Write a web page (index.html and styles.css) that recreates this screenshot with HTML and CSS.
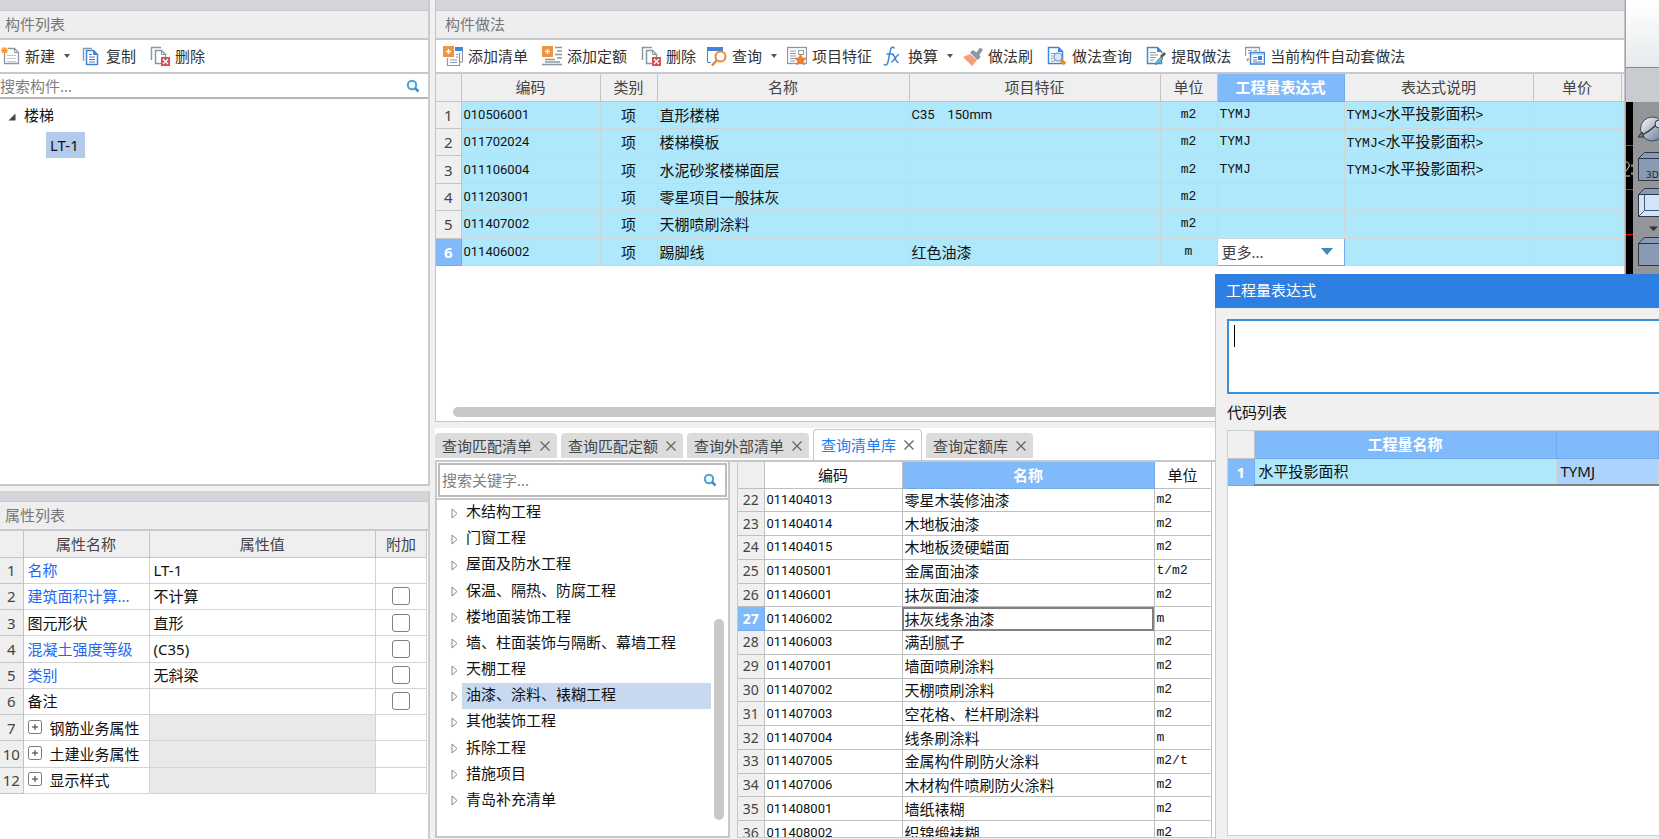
FILE: index.html
```html
<!DOCTYPE html>
<html lang="zh-CN">
<head>
<meta charset="utf-8">
<title>构件做法</title>
<link rel="stylesheet" href="styles.css">
</head>
<body>
<svg class="defs" aria-hidden="true">
  <defs>
    <symbol id="i-delete" viewBox="0 0 20 20">
      <path d="M1.500 14V1.500H11" fill="none" stroke="#8b98a3" stroke-width="1.500"/>
      <path d="M5.500 17.500V4.500H11.500L15.500 8.500V17.500Z" fill="#fff" stroke="#8b98a3" stroke-width="1.500"/>
      <path d="M11.500 4.500V8.500H15.500" fill="none" stroke="#8b98a3"/>
      <rect x="11" y="11" width="9" height="9" fill="#d55050"/>
      <path d="M13 13l5 5M18 13l-5 5" stroke="#fff" stroke-width="1.300"/>
    </symbol>
    <symbol id="i-search" viewBox="0 0 14 14">
      <circle cx="6" cy="6" r="4.200" fill="#eef8ff" stroke="#4e9fd0" stroke-width="2"/>
      <path d="M9 9l3.500 3.500" stroke="#3f8fc5" stroke-width="2.500"/>
    </symbol>
    <symbol id="i-plus" viewBox="0 0 14 14">
      <rect x="0.500" y="0.500" width="13" height="13" rx="2" fill="#fff" stroke="#777"/>
      <path d="M4 7h6M7 4v6" stroke="#333"/>
    </symbol>
    <symbol id="i-tri" viewBox="0 0 7 11">
      <path d="M1 1v9l5-4.500z" fill="#fff" stroke="#888"/>
    </symbol>
    <symbol id="i-close" viewBox="0 0 10 10">
      <path d="M0.500 0.500l9 9M9.500 0.500l-9 9" stroke="#666" stroke-width="1.300"/>
    </symbol>
    <linearGradient id="g-ball" x1="0" y1="0" x2="1" y2="1">
      <stop offset="0" stop-color="#fff"/><stop offset="1" stop-color="#5d6f8c"/>
    </linearGradient>
  </defs>
</svg>
<div class="app">
  <aside class="side">
    <section class="panel components">
      <div class="strip"></div>
      <h2 class="title">构件列表</h2>
      <div class="toolbar">
        <button class="tool split"><svg class="ico" viewBox="0 0 20 20"><path d="M4.500 17.500V2.500H14.500L18.500 6.500V17.500Z" fill="#fff" stroke="#8b98a3" stroke-width="1.300"/><path d="M14.500 2.500V6.500H18.500" fill="none" stroke="#8b98a3"/><path d="M7 9.500h9M7 12.500h9M7 15.500h9" stroke="#c3c8cd"/><rect x="1" y="1" width="7" height="7" fill="#fff"/><path d="M4.500 1v7M1 4.500h7M2 2l5 5M7 2l-5 5" stroke="#f39c32" stroke-width="1.300"/></svg><span>新建</span><i class="caret"></i></button>
        <button class="tool"><svg class="ico" viewBox="0 0 20 20"><path d="M2.500 15V2.500H11" fill="none" stroke="#8b98a3" stroke-width="1.400"/><path d="M5.500 18.500V4.500H12.500L16.500 8.500V18.500Z" fill="#fff" stroke="#3f86d8" stroke-width="1.500"/><path d="M12.500 4.500V8.500H16.500" fill="#3f86d8" stroke="#3f86d8"/><path d="M8 8.500h3M8 11h6M8 13.500h6M8 16h6" stroke="#3f86d8"/></svg><span>复制</span></button>
        <button class="tool"><svg class="ico"><use href="#i-delete"/></svg><span>删除</span></button>
      </div>
      <label class="search flush"><input type="text" placeholder="搜索构件..." aria-label="搜索构件"><svg class="glass"><use href="#i-search"/></svg></label>
      <ul class="tree root">
        <li><svg class="open" viewBox="0 0 8 8"><path d="M7.500 0.500v7H0.500z" fill="#444"/></svg><span>楼梯</span>
          <ul><li><span class="picked">LT-1</span></li></ul>
        </li>
      </ul>
    </section>
    <section class="panel props">
      <div class="strip"></div>
      <h2 class="title">属性列表</h2>
      <table class="grid prop-grid">
        <colgroup><col class="w23"><col class="w126"><col><col class="w51"></colgroup>
        <thead><tr><th></th><th>属性名称</th><th>属性值</th><th>附加</th></tr></thead>
        <tbody>
          <tr><th>1</th><td class="link">名称</td><td>LT-1</td><td></td></tr>
          <tr><th>2</th><td class="link">建筑面积计算...</td><td>不计算</td><td class="mid"><input type="checkbox" aria-label="附加 建筑面积计算"></td></tr>
          <tr><th>3</th><td>图元形状</td><td>直形</td><td class="mid"><input type="checkbox" aria-label="附加 图元形状"></td></tr>
          <tr><th>4</th><td class="link">混凝土强度等级</td><td>(C35)</td><td class="mid"><input type="checkbox" aria-label="附加 混凝土强度等级"></td></tr>
          <tr><th>5</th><td class="link">类别</td><td>无斜梁</td><td class="mid"><input type="checkbox" aria-label="附加 类别"></td></tr>
          <tr><th>6</th><td>备注</td><td></td><td class="mid"><input type="checkbox" aria-label="附加 备注"></td></tr>
          <tr><th>7</th><td><svg class="plus"><use href="#i-plus"/></svg>钢筋业务属性</td><td class="off"></td><td></td></tr>
          <tr><th>10</th><td><svg class="plus"><use href="#i-plus"/></svg>土建业务属性</td><td class="off"></td><td></td></tr>
          <tr><th>12</th><td><svg class="plus"><use href="#i-plus"/></svg>显示样式</td><td class="off"></td><td></td></tr>
        </tbody>
      </table>
    </section>
  </aside>

  <main class="main">
    <section class="panel method">
      <div class="strip"></div>
      <h2 class="title wide">构件做法</h2>
      <div class="toolbar">
        <button class="tool"><svg class="ico" viewBox="0 0 20 20"><path d="M4.500 12v7.500H16.500V7" fill="#fff" stroke="#8b98a3" stroke-width="1.200"/><path d="M19.500 4v12H17" fill="none" stroke="#8b98a3" stroke-width="1.200"/><path d="M12 1h8v4h-8z" fill="#3f86d8"/><path d="M7 14h7M7 16.500h7M13 8.500h2M13 11h2" stroke="#8b98a3"/><rect width="11" height="11" fill="#ee9444"/><path d="M5.500 3v5M3 5.500h5" stroke="#fff" stroke-width="1.300"/></svg><span>添加清单</span></button>
        <button class="tool"><svg class="ico" viewBox="0 0 20 20"><path d="M13 1.500h7M15 5h5M13 8.500h7M15 12h5M3 13.500h10M0 18.500h20M3 16h15" stroke="#8b98a3" stroke-width="1.300"/><rect width="11" height="11" fill="#ee9444"/><path d="M5.500 3v5M3 5.500h5" stroke="#fff" stroke-width="1.300"/></svg><span>添加定额</span></button>
        <button class="tool"><svg class="ico"><use href="#i-delete"/></svg><span>删除</span></button>
        <button class="tool split"><svg class="ico" viewBox="0 0 20 20"><path d="M0 1h16v4H0z" fill="#3f86d8"/><path d="M0.500 4v12.500H4M15.500 4v2" fill="none" stroke="#3f86d8"/><circle cx="13.500" cy="10.500" r="5" fill="#fff" stroke="#ed8436" stroke-width="2"/><path d="M9.500 14.500L5 19.500" stroke="#ed8436" stroke-width="2.500"/></svg><span>查询</span><i class="caret"></i></button>
        <button class="tool"><svg class="ico" viewBox="0 0 20 20"><rect x="0.500" y="1.500" width="19" height="16" fill="#fff" stroke="#8b98a3" stroke-width="1.300"/><path d="M3 5h6M3 7.500h6M3 10h6M3 12.500h5M3 15h5" stroke="#8b98a3"/><rect x="11.500" y="4.500" width="5" height="4" fill="none" stroke="#8b98a3"/><path d="M13.500 7.500l2 4 4.500.500-3.300 3 1 4.500-4.200-2.300-4.200 2.300 1-4.500L7 12l4.500-.500z" fill="#ef7e2e"/></svg><span>项目特征</span></button>
        <button class="tool split"><svg class="ico" viewBox="0 0 20 20"><path d="M11.500 2.500C9.500-.500 7.800 1.500 7.200 5L5 16c-.600 3-2.300 4-4.200 2.200M3.500 8h7" fill="none" stroke="#3f86d8" stroke-width="1.500"/><path d="M9 9c3-2 3.200 8.500 6.700 7.500M16 8.500c-2-.500-6 8.500-8 7.500" fill="none" stroke="#3f86d8" stroke-width="1.500"/></svg><span>换算</span><i class="caret"></i></button>
        <button class="tool"><svg class="ico" viewBox="0 0 20 20"><path d="M0 11l7-3 7 6-5 6z" fill="#f7a078"/><path d="M7 6.500l3-2.500 3.500 2.500L17 1.500l3 2-3.500 5.500 1 2.500-3 2.500z" fill="#8b98a3"/></svg><span>做法刷</span></button>
        <button class="tool"><svg class="ico" viewBox="0 0 20 20"><path d="M1.500 17.500V1.500H11.500L15.500 5.500V17.500Z" fill="#fff" stroke="#3f86d8" stroke-width="1.500"/><path d="M11 1v5h5z" fill="#3f86d8"/><path d="M4 7.500h4M4 10h2M4 12.500h2M4 15h4" stroke="#8b98a3"/><circle cx="11" cy="11" r="4" fill="#dce8fa" stroke="#6a93d0" stroke-width="1.200"/><path d="M14 14l4 4" stroke="#f08c1d" stroke-width="3.500"/></svg><span>做法查询</span></button>
        <button class="tool"><svg class="ico" viewBox="0 0 20 20"><path d="M15.500 7V5.500L11.500 1.500H1.500V17.500H15.500V15" fill="#fff" stroke="#3f86d8" stroke-width="1.500"/><path d="M11 1v5h5z" fill="#3f86d8"/><path d="M4 6.500h6M4 9h8M4 11.500h6M4 14h4" stroke="#8b98a3"/><path d="M9.500 18.500l1-3 4.500-4.500 2 2-4.500 4.500z" fill="#5cc0d8" stroke="#5e6f7a" stroke-width=".800"/><path d="M14 10l4-4 2 2-4 4z" fill="#555"/></svg><span>提取做法</span></button>
        <button class="tool"><svg class="ico" viewBox="0 0 20 20"><path d="M0.500 10V1.500H14.500V5" fill="none" stroke="#8b98a3" stroke-width="1.300"/><path d="M3 4.500h4M3 7h2M9 4.500h3" stroke="#8b98a3"/><path d="M1 13l3-1-1 4z" fill="#f08c1d"/><rect x="5.500" y="6.500" width="14" height="11.500" fill="#fff" stroke="#3f86d8" stroke-width="1.500"/><path d="M6 8h13" stroke="#8bb4ea"/><path d="M8 11.500h4M8 14h4M8 16h9" stroke="#3f86d8"/><rect x="13" y="10" width="4" height="4" fill="#3f86d8"/></svg><span>当前构件自动套做法</span></button>
      </div>
      <table class="grid work-grid">
        <colgroup><col class="w25"><col class="w139"><col class="w57"><col><col class="w251"><col class="w57"><col class="w127"><col class="w189"><col class="w88"><col class="w3"></colgroup>
        <thead><tr><th></th><th>编码</th><th>类别</th><th>名称</th><th>项目特征</th><th>单位</th><th class="on">工程量表达式</th><th>表达式说明</th><th>单价</th><th></th></tr></thead>
        <tbody>
          <tr><th>1</th><td class="code">010506001</td><td class="mid">项</td><td>直形楼梯</td><td class="code spaced">C35    150mm</td><td class="mono mid">m2</td><td class="mono">TYMJ</td><td><span class="mono">TYMJ&lt;</span>水平投影面积<span class="mono">&gt;</span></td><td></td><td></td></tr>
          <tr><th>2</th><td class="code">011702024</td><td class="mid">项</td><td>楼梯模板</td><td></td><td class="mono mid">m2</td><td class="mono">TYMJ</td><td><span class="mono">TYMJ&lt;</span>水平投影面积<span class="mono">&gt;</span></td><td></td><td></td></tr>
          <tr><th>3</th><td class="code">011106004</td><td class="mid">项</td><td>水泥砂浆楼梯面层</td><td></td><td class="mono mid">m2</td><td class="mono">TYMJ</td><td><span class="mono">TYMJ&lt;</span>水平投影面积<span class="mono">&gt;</span></td><td></td><td></td></tr>
          <tr><th>4</th><td class="code">011203001</td><td class="mid">项</td><td>零星项目一般抹灰</td><td></td><td class="mono mid">m2</td><td></td><td></td><td></td><td></td></tr>
          <tr><th>5</th><td class="code">011407002</td><td class="mid">项</td><td>天棚喷刷涂料</td><td></td><td class="mono mid">m2</td><td></td><td></td><td></td><td></td></tr>
          <tr><th class="on">6</th><td class="code">011406002</td><td class="mid">项</td><td>踢脚线</td><td>红色油漆</td><td class="mono mid">m</td><td class="pick"><div class="combo"><select aria-label="工程量表达式"><option>更多...</option></select><i class="drop"></i></div></td><td></td><td></td><td></td></tr>
        </tbody>
      </table>
      <div class="hscroll"></div>
    </section>

    <section class="query">
      <nav class="tabs">
        <button class="tab">查询匹配清单<svg class="x"><use href="#i-close"/></svg></button>
        <button class="tab">查询匹配定额<svg class="x"><use href="#i-close"/></svg></button>
        <button class="tab">查询外部清单<svg class="x"><use href="#i-close"/></svg></button>
        <button class="tab current">查询清单库<svg class="x"><use href="#i-close"/></svg></button>
        <button class="tab">查询定额库<svg class="x"><use href="#i-close"/></svg></button>
      </nav>
      <div class="query-body">
        <div class="catalog">
          <label class="search boxed"><input type="text" placeholder="搜索关键字..." aria-label="搜索关键字"><svg class="glass"><use href="#i-search"/></svg></label>
          <div class="catalog-list">
            <ul class="tree chapters">
              <li><svg class="tri"><use href="#i-tri"/></svg><span>木结构工程</span></li>
              <li><svg class="tri"><use href="#i-tri"/></svg><span>门窗工程</span></li>
              <li><svg class="tri"><use href="#i-tri"/></svg><span>屋面及防水工程</span></li>
              <li><svg class="tri"><use href="#i-tri"/></svg><span>保温、隔热、防腐工程</span></li>
              <li><svg class="tri"><use href="#i-tri"/></svg><span>楼地面装饰工程</span></li>
              <li><svg class="tri"><use href="#i-tri"/></svg><span>墙、柱面装饰与隔断、幕墙工程</span></li>
              <li><svg class="tri"><use href="#i-tri"/></svg><span>天棚工程</span></li>
              <li><svg class="tri"><use href="#i-tri"/></svg><span class="sel">油漆、涂料、裱糊工程</span></li>
              <li><svg class="tri"><use href="#i-tri"/></svg><span>其他装饰工程</span></li>
              <li><svg class="tri"><use href="#i-tri"/></svg><span>拆除工程</span></li>
              <li><svg class="tri"><use href="#i-tri"/></svg><span>措施项目</span></li>
              <li><svg class="tri"><use href="#i-tri"/></svg><span>青岛补充清单</span></li>
            </ul>
            <div class="vscroll"></div>
          </div>
        </div>
        <div class="items">
          <table class="grid item-grid">
            <colgroup><col class="w26"><col class="w138"><col class="w252"><col class="w57"></colgroup>
            <thead><tr><th></th><th class="plain">编码</th><th class="on">名称</th><th class="plain">单位</th></tr></thead>
            <tbody>
              <tr><th>22</th><td class="code">011404013</td><td>零星木装修油漆</td><td class="mono">m2</td></tr>
              <tr><th>23</th><td class="code">011404014</td><td>木地板油漆</td><td class="mono">m2</td></tr>
              <tr><th>24</th><td class="code">011404015</td><td>木地板烫硬蜡面</td><td class="mono">m2</td></tr>
              <tr><th>25</th><td class="code">011405001</td><td>金属面油漆</td><td class="mono">t/m2</td></tr>
              <tr><th>26</th><td class="code">011406001</td><td>抹灰面油漆</td><td class="mono">m2</td></tr>
              <tr><th class="on">27</th><td class="code">011406002</td><td class="focus">抹灰线条油漆</td><td class="mono">m</td></tr>
              <tr><th>28</th><td class="code">011406003</td><td>满刮腻子</td><td class="mono">m2</td></tr>
              <tr><th>29</th><td class="code">011407001</td><td>墙面喷刷涂料</td><td class="mono">m2</td></tr>
              <tr><th>30</th><td class="code">011407002</td><td>天棚喷刷涂料</td><td class="mono">m2</td></tr>
              <tr><th>31</th><td class="code">011407003</td><td>空花格、栏杆刷涂料</td><td class="mono">m2</td></tr>
              <tr><th>32</th><td class="code">011407004</td><td>线条刷涂料</td><td class="mono">m</td></tr>
              <tr><th>33</th><td class="code">011407005</td><td>金属构件刷防火涂料</td><td class="mono">m2/t</td></tr>
              <tr><th>34</th><td class="code">011407006</td><td>木材构件喷刷防火涂料</td><td class="mono">m2</td></tr>
              <tr><th>35</th><td class="code">011408001</td><td>墙纸裱糊</td><td class="mono">m2</td></tr>
              <tr><th>36</th><td class="code">011408002</td><td>织锦缎裱糊</td><td class="mono">m2</td></tr>
            </tbody>
          </table>
        </div>
      </div>
    </section>
  </main>

  <div class="canvas">
    <div class="ribbon"></div>
    <div class="ribbon-foot"></div>
    <div class="scene">
      <svg class="model" viewBox="0 0 7 180"><path d="M0 43.500h7M0 87.500h7" stroke="#0a8a0a"/><path d="M0 132.500h7" stroke="#f00" stroke-width="1.300"/><path d="M0 60q4 0 3 5l-3 4M0 74h4M6 62v3M6 70v3" fill="none" stroke="#ddd"/></svg>
      <svg class="views" viewBox="0 0 26 180">
        <circle cx="19.500" cy="27" r="12" fill="url(#g-ball)" stroke="#3d4a5e"/><path d="M6 34q10-3 20-14" fill="none" stroke="#333d4f" stroke-width="1.500"/><path d="M5 35l4-5 2 5z" fill="#777" stroke="#333"/><circle cx="26" cy="22" r="4" fill="#ccd5e2" stroke="#333"/>
        <g fill="#8a9ab3" stroke="#2c3646"><path d="M5.500 56.500l6-6H30v6z"/><path d="M5.500 56.500H30V78.500H5.500z"/></g>
        <text x="13" y="76" class="cube-label">3D</text>
        <g stroke="#2c3646"><path d="M5.500 92.500l6-6H30v6z" fill="#8a9ab3"/><path d="M5.500 92.500H30V114.500H5.500z" fill="#d0e4fb"/><path d="M11.500 92.500v16H30M5.500 114.500l6-6" fill="none" stroke="#46566c"/></g>
        <path d="M16 124.500h9l-4.500 4.500z" fill="#333"/>
        <g fill="#8a9ab3" stroke="#2c3646"><path d="M5.500 141.500l6-6H30v6z"/><path d="M5.500 141.500H30V163.500H5.500z"/></g>
      </svg>
    </div>
  </div>

  <div class="dialog" role="dialog" aria-labelledby="dlg-title">
    <h2 class="dialog-title" id="dlg-title">工程量表达式</h2>
    <div class="dialog-body">
      <div class="expr"><textarea aria-label="工程量表达式"></textarea><i class="cursor"></i></div>
      <h3 class="list-title">代码列表</h3>
      <div class="code-list">
        <table class="grid code-grid">
          <colgroup><col class="w26"><col class="w302"><col></colgroup>
          <thead><tr><th></th><th class="on">工程量名称</th><th class="on"></th></tr></thead>
          <tbody><tr><th class="on">1</th><td class="name">水平投影面积</td><td class="val">TYMJ</td></tr></tbody>
        </table>
      </div>
    </div>
  </div>
</div>
</body>
</html>
```
FILE: styles.css
```css
* { box-sizing: border-box; }

:root {
  --ui: "Noto Sans", "Noto Sans CJK SC", sans-serif;
  --line: #c6c8cc;
  --accent: #80bafb;
}

body {
  margin: 0;
  overflow: hidden;
  font-family: var(--ui);
  font-size: 15px;
  line-height: 20px;
  color: #111;
  background: #f0f0f0;
}

h2, h3, ul { margin: 0; padding: 0; }
ul { list-style: none; }
button, input, select, textarea { font: inherit; color: inherit; }

.defs { position: absolute; width: 0; height: 0; }

.app {
  position: relative;
  display: flex;
  height: 100vh;
  overflow: hidden;
}

/* Shared panel parts */
.panel { display: flex; flex-direction: column; background: #fff; }
.strip { flex: none; height: 11px; background: #d3d5db; border-bottom: 1px solid #c9cbd0; }
.title {
  flex: none;
  height: 29px;
  padding: 3px 5px 0;
  font-size: 15px;
  line-height: 20px;
  font-weight: 400;
  color: #777;
  background: #eee;
  border-bottom: 2px solid var(--line);
}
.title.wide { padding-left: 9px; }

.toolbar {
  flex: none;
  display: flex;
  align-items: center;
  height: 34px;
  border-bottom: 2px solid var(--line);
  white-space: nowrap;
}
.tool {
  display: flex;
  align-items: center;
  gap: 5px;
  height: 26px;
  padding: 0 7px;
  border: 0;
  background: none;
  color: #333;
}
.tool.split { padding: 0 3px 0 4px; }
.side .tool.split { padding: 0 4px 0 0; }
.ico { width: 20px; height: 20px; flex: none; }
.caret {
  margin-left: 4px;
  border: 3px solid transparent;
  border-top: 4px solid #555;
  border-bottom: 0;
}

.search { display: flex; align-items: center; background: #fff; }
.search input { flex: 1; min-width: 0; border: 0; outline: 0; padding: 0; background: none; }
.search input::placeholder { color: #808080; opacity: 1; }
.search.flush { flex: none; height: 25px; padding: 0 8px 0 0; border-bottom: 2px solid #b4b4b4; }
.search.boxed { flex: none; margin: 1px 1px 0; height: 34px; padding: 0 8px 0 2px; border: 2px solid #bdbdbd; }
.glass { width: 14px; height: 14px; }

/* Left column */
.side {
  flex: none;
  width: 430px;
  display: flex;
  flex-direction: column;
  gap: 5px;
}
.components { flex: none; height: 486px; border-right: 2px solid #ccc; border-bottom: 2px solid #c8c8c8; }
.props { flex: 1; border-right: 2px solid #ccc; }

.root { padding-top: 6px; }
.root > li { padding-left: 8px; }
.open { width: 8px; height: 8px; margin-right: 8px; }
.root ul { padding: 7px 0 0 38px; }
.picked { display: inline-block; height: 26px; padding: 3px 6px 0 4px; background: #b2cbec; }

/* Grids */
.grid { border-collapse: collapse; table-layout: fixed; }
.grid th, .grid td {
  padding: 0 4px;
  border: 1px solid #d4d4d4;
  text-align: left;
  white-space: nowrap;
  overflow: hidden;
  line-height: 20px;
  font-weight: 400;
}
.grid th {
  padding: 0;
  text-align: center;
  color: #444;
  background: #efefef;
  border-color: #c4c4c4;
}
.grid .on { background: var(--accent); border-color: #70abf0; color: #fff; font-weight: 700; }
.grid .mid { text-align: center; }
.grid .code { font-family: Roboto, sans-serif; font-size: 13px; }
.grid .mono { font-family: "Liberation Mono", monospace; font-size: 13px; }
.grid .spaced { white-space: pre; }

.w3 { width: 3px; } .w23 { width: 23px; } .w25 { width: 25px; } .w26 { width: 26px; }
.w51 { width: 51px; } .w57 { width: 57px; } .w88 { width: 88px; }
.w126 { width: 126px; } .w127 { width: 127px; } .w138 { width: 138px; } .w139 { width: 139px; }
.w189 { width: 189px; } .w251 { width: 251px; } .w252 { width: 252px; } .w302 { width: 302px; }

.prop-grid { width: 427px; height: 263px; }
.prop-grid tr { height: 26px; }
.prop-grid th:first-child, .item-grid th:first-child, .code-grid th:first-child { border-left: 0; }
.prop-grid thead th, .work-grid thead th, .item-grid thead th { border-top: 0; }
.prop-grid .link { color: #2468f2; }
.prop-grid .off { background: #e9e9e9; }
.prop-grid input {
  appearance: none;
  display: block;
  width: 18px;
  height: 18px;
  margin: 0 auto;
  border: 1px solid #808080;
  border-radius: 3px;
  background: #fff;
}
.plus { width: 14px; height: 14px; margin-right: 8px; }

/* Main column */
.main {
  flex: 1;
  min-width: 0;
  display: flex;
  flex-direction: column;
  margin-left: 5px;
}
.method { flex: none; height: 422px; border: 1px solid #c4c4c4; border-top: 0; }
.work-grid { width: 100%; height: 192px; }
.work-grid tr { height: 27px; }
.work-grid th:first-child { border-left: 0; }
.work-grid td { background: #aee8fa; border-color: #cdd6da; padding: 0 2px; }
.work-grid td:last-child, .work-grid th:last-child { padding: 0; border-right: 0; }
.work-grid td.pick { padding: 0; background: #fff; border-color: #70abf0; }
.combo { display: flex; align-items: center; padding: 0 11px 0 4px; }
.combo select {
  flex: 1;
  min-width: 0;
  appearance: none;
  border: 0;
  padding: 0;
  outline: 0;
  background: none;
  color: #444;
}
.drop { border: 6px solid transparent; border-top: 7px solid #3f89b5; border-bottom: 0; }
.hscroll { height: 10px; margin: auto 0 4px 17px; border-radius: 5px; background: #c8c8c8; }

.query { flex: 1; min-height: 0; display: flex; flex-direction: column; padding-top: 6px; }
.tabs {
  flex: none;
  display: flex;
  align-items: flex-end;
  gap: 4px;
  height: 34px;
  border-bottom: 2px solid var(--line);
  background: #fff;
}
.tab {
  display: flex;
  align-items: center;
  gap: 8px;
  height: 25px;
  margin-bottom: 2px;
  padding: 0 7px;
  border: 0;
  border-radius: 4px 4px 0 0;
  background: #dcdcdc;
  color: #444;
  white-space: nowrap;
}
.tab.current {
  height: 31px;
  margin-bottom: 0;
  padding-bottom: 1px;
  border: 1px solid var(--line);
  border-bottom: 0;
  background: #fff;
  color: #2080ee;
}
.x { width: 10px; height: 10px; }

.query-body { flex: 1; min-height: 0; display: flex; gap: 7px; padding-bottom: 1px; }
.catalog {
  flex: none;
  width: 295px;
  display: flex;
  flex-direction: column;
  border: 2px solid var(--line);
  border-top: 0;
  background: #fff;
}
.catalog-list {
  flex: 1;
  min-height: 0;
  display: flex;
  margin-top: 1px;
  border-top: 2px solid var(--line);
}
.chapters { flex: 1; display: grid; grid-auto-rows: 1fr; height: 314px; }
.chapters li { display: flex; align-items: center; padding-left: 14px; }
.chapters span { flex: 1; margin-left: 4px; padding: 0 4px 4px; line-height: 22px; white-space: nowrap; }
.chapters .sel { background: #c8d8ef; }
.tri { width: 7px; height: 11px; }
.vscroll { width: 10px; height: 201px; margin: 119px 4px 0 3px; border-radius: 5px; background: #c8c8c8; }

.items { flex: 1; overflow: hidden; background: #fff; border: 1px solid var(--line); border-top: 0; }
.item-grid { width: 473px; height: 383px; }
.item-grid tr { height: 23px; }
.item-grid thead tr { height: 26px; }
.item-grid td, .item-grid th { border-color: #bfbfbf; padding: 0 2px; }
.item-grid tbody th { font-size: 14px; }
.item-grid .plain { background: #fff; color: #111; }
.item-grid .focus { outline: 2px solid #808080; outline-offset: -2px; }

/* Model view behind the window */
.canvas { flex: none; width: 34px; display: flex; flex-direction: column; border-left: 1px solid #9fa2a7; }
.ribbon { height: 68px; background: linear-gradient(#fff, #e6eaec); border-bottom: 1px solid #888c90; }
.ribbon-foot { height: 34px; background: #c8cbcf; }
.scene { flex: 1; display: flex; background: #000; }
.model { width: 7px; height: 180px; }
.views { width: 26px; height: 180px; background: #949599; }
.cube-label { font: 9px "DejaVu Sans", sans-serif; fill: #1c2430; }

/* Expression window */
.dialog {
  position: absolute;
  left: 1215px;
  right: 0;
  top: 274px;
  bottom: 0;
  display: flex;
  flex-direction: column;
  background: #f0f0f0;
}
.dialog-title {
  height: 34px;
  padding: 6px 11px 0;
  font-size: 15px;
  font-weight: 400;
  color: #fff;
  background: #2d80e2;
}
.dialog-body {
  flex: 1;
  display: flex;
  flex-direction: column;
  padding: 11px 0 3px 11px;
  border-left: 1px solid #c3cbd8;
}
.expr { position: relative; height: 75px; }
.expr textarea {
  display: block;
  width: 100%;
  height: 100%;
  padding: 4px 6px;
  border: 2px solid #3a8fdc;
  border-right: 0;
  outline: 0;
  resize: none;
  background: #fff;
}
.cursor { position: absolute; left: 7px; top: 6px; width: 1px; height: 22px; background: #000; }
.list-title { margin: 8px 0; font-size: 15px; font-weight: 400; }
.code-list { flex: 1; border: 1px solid #cfcfcf; border-right: 0; background: #fff; }
.code-grid { width: 100%; height: 54px; }
.code-grid tr { height: 27px; }
.code-grid thead th { border-top: 0; }
.code-grid tbody td { border-bottom: 2px solid #808080; }
.code-grid .name { background: #aee8fa; }
.code-grid .val { background: #abd3fd; }
```
